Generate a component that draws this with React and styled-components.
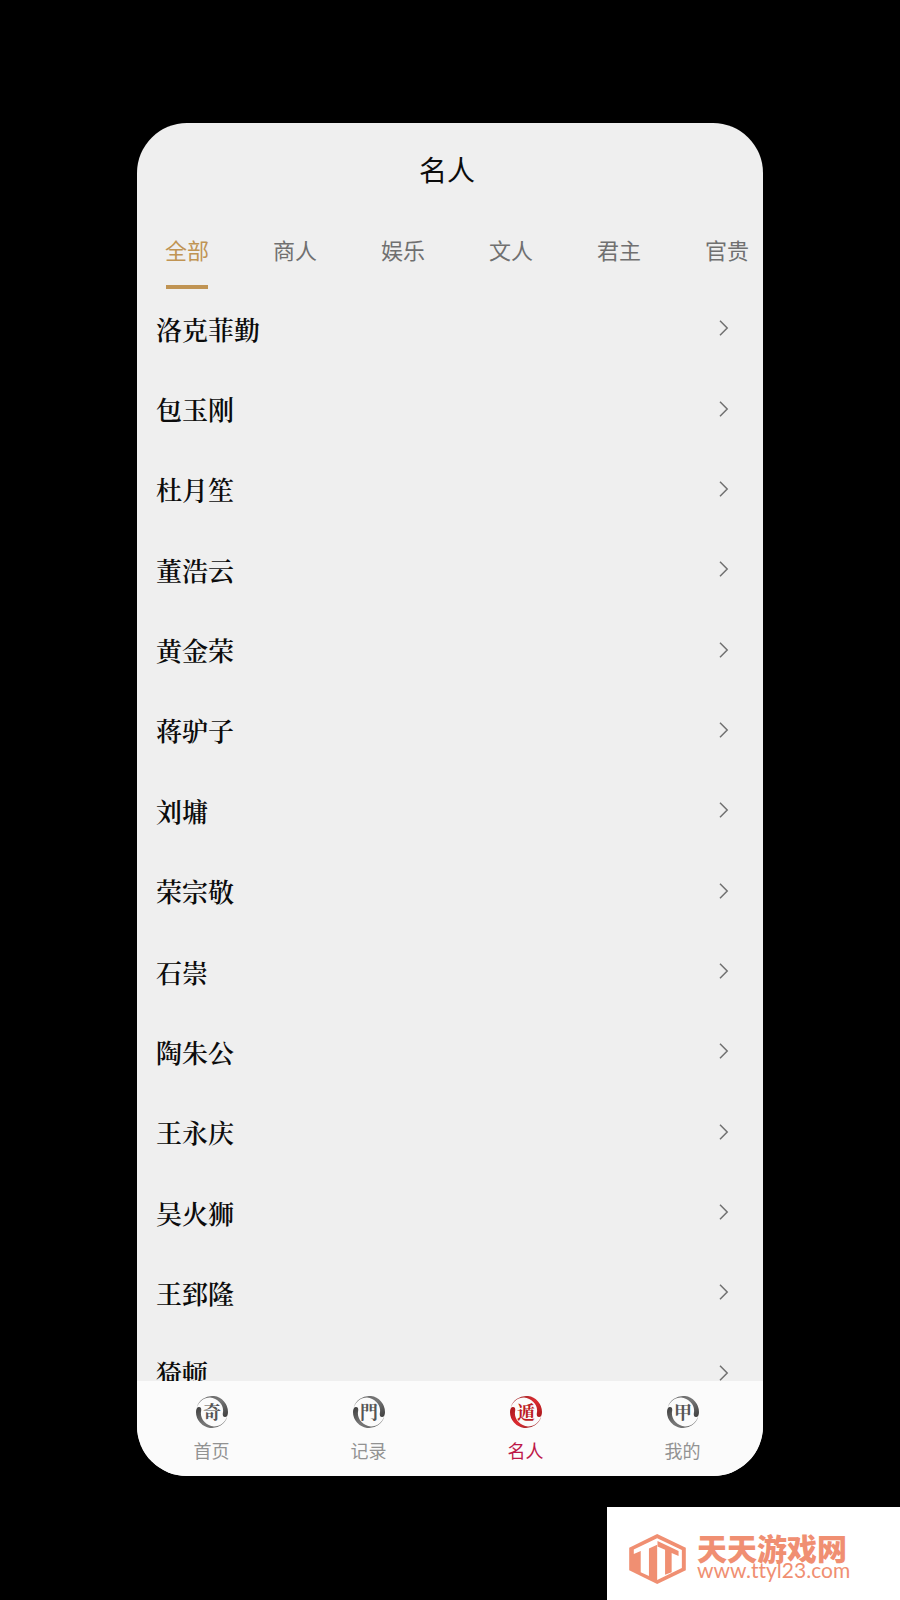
import React, { useState } from 'react';
import styled, { createGlobalStyle } from 'styled-components';

const GlobalStyle = createGlobalStyle`
  * {
    box-sizing: border-box;
  }
  body {
    margin: 0;
    background: #000;
    font-family: "Noto Sans CJK SC", sans-serif;
  }
`;

const Page = styled.div`
  display: flex;
  flex-direction: column;
  min-height: 100vh;
  padding-top: 123px;
  background: #000;
`;

const Phone = styled.main`
  display: flex;
  flex: 1;
  margin: 0 137px;
  overflow: hidden;
  border-radius: 50px;
  background: #efefef;
`;

const Screen = styled.div`
  display: flex;
  flex: 1;
  flex-direction: column;
  min-width: 0;
  margin: 0 2px 0 -4px;
`;

const Title = styled.h1`
  margin: 0;
  padding-top: 24px;
  color: #0c0c0c;
  font-size: 28px;
  font-weight: 400;
  line-height: 44px;
  text-align: center;
`;

const Tabs = styled.div`
  display: flex;
  margin-top: 24px;
  overflow: hidden;
`;

const Tab = styled.button`
  display: flex;
  flex: 0 0 108px;
  flex-direction: column;
  align-items: center;
  height: 74px;
  padding: 16px 0 0;
  border: 0;
  background: none;
  color: ${(props) => (props.$active ? '#c09453' : '#707070')};
  font-family: inherit;
  font-size: 22px;
  line-height: 36px;
  cursor: pointer;

  &::after {
    content: "";
    width: 42px;
    height: 4px;
    margin-top: 18px;
    background: ${(props) => (props.$active ? '#c09453' : 'transparent')};
  }
`;

const ListWrap = styled.div`
  display: flex;
  flex: 1;
  overflow: hidden;
`;

// the last row runs under the bottom bar
const List = styled.ul`
  display: grid;
  flex: 1;
  grid-auto-rows: minmax(80px, 1fr);
  margin: 0 0 -33px;
  padding: 0;
  list-style: none;
`;

const Row = styled.button`
  display: flex;
  align-items: center;
  justify-content: space-between;
  width: 100%;
  height: 100%;
  padding: 0 32px 2px 23px;
  border: 0;
  background: none;
  color: #0c0c0c;
  font-family: "Noto Serif CJK SC", "Noto Sans CJK SC", serif;
  font-size: 26px;
  font-weight: 600;
  text-align: left;
  cursor: pointer;
`;

const Nav = styled.nav`
  display: flex;
  height: 95px;
  margin: 0 -2px 0 0;
  padding-right: 2px;
  background: #fbfbfb;
`;

const NavItem = styled.a`
  display: flex;
  flex: 1;
  flex-direction: column;
  align-items: center;
  padding-top: 14px;
  color: ${(props) => (props.$active ? '#bd1747' : '#929292')};
  font-size: 18px;
  line-height: 28px;
  text-decoration: none;

  svg {
    margin-bottom: 7px;
  }
`;

const Banner = styled.a`
  display: flex;
  align-items: center;
  align-self: flex-end;
  gap: 10px;
  width: 293px;
  height: 93px;
  margin-top: 31px;
  padding: 10px 0 0 21px;
  background: #fff;
  color: #f08f72;
  text-decoration: none;
`;

const BannerText = styled.span`
  display: flex;
  flex-direction: column;
  padding-bottom: 4px;
`;

const BannerName = styled.strong`
  font-size: 30px;
  font-weight: 900;
  line-height: 26px;
`;

const BannerUrl = styled.span`
  font-family: Lato, sans-serif;
  font-size: 21px;
  font-variant-ligatures: none;
  line-height: 20px;
`;

const tabs = ['全部', '商人', '娱乐', '文人', '君主', '官贵'];

const people = [
  '洛克菲勤',
  '包玉刚',
  '杜月笙',
  '董浩云',
  '黄金荣',
  '蒋驴子',
  '刘墉',
  '荣宗敬',
  '石崇',
  '陶朱公',
  '王永庆',
  '吴火狮',
  '王郅隆',
  '猗顿',
];

const navItems = [
  { mark: '奇', label: '首页' },
  { mark: '門', label: '记录' },
  { mark: '遁', label: '名人' },
  { mark: '甲', label: '我的' },
];

const Chevron = () => (
  <svg width="10" height="16" viewBox="0 0 10 16" fill="none" stroke="#707070" strokeWidth="1.5">
    <path d="M1 .8 8.2 8 1 15.2" />
  </svg>
);

// one brush stroke of the ring, drawn twice
const stroke =
  'M1.500 13A16 16 0 0 1 33 17C33 20 32 22 30 22C27.500 22 27.500 19.500 28 17C29 10 23 3.500 15 2.500C9 2.500 4 6.500 1.500 13Z';

const InkIcon = ({ mark, active }) => {
  const id = active ? 'ink-red' : 'ink-grey';
  return (
    <svg width="34" height="34" viewBox="0 0 34 34" aria-hidden="true">
      <defs>
        <linearGradient id={id} x1="0" y1="0" x2="1" y2="1">
          <stop offset="0" stopColor={active ? '#8c2a2a' : '#666'} />
          <stop offset=".5" stopColor={active ? '#dc2a30' : '#777'} />
          <stop offset="1" stopColor={active ? '#a8181c' : '#3c3c3c'} />
        </linearGradient>
      </defs>
      <g fill={`url(#${id})`}>
        <path d={stroke} />
        <path d={stroke} transform="rotate(180 17 17)" />
      </g>
      <text
        x="17"
        y="24"
        fill={active ? '#bd1c24' : '#555'}
        fontFamily="Noto Serif CJK SC, Noto Sans CJK SC, serif"
        fontSize="18"
        fontWeight="700"
        textAnchor="middle"
      >
        {mark}
      </text>
    </svg>
  );
};

const Logo = () => (
  <svg width="59" height="52" viewBox="85 37 178 158" aria-hidden="true">
    <path fill="#f08f72" d="M173 40 260 82V150L173 192 88 150V82Z" />
    <path fill="#fff" d="M102 87 173 53 248 89V143L173 180V73L148 84V168L123 156V92L102 101Z" />
    <path fill="#f08f72" d="M174 61 238 92V107L217 98V156L197 164V88L174 78Z" />
  </svg>
);

const App = () => {
  const [activeTab, setActiveTab] = useState('全部');
  const [activeNav, setActiveNav] = useState('名人');

  return (
    <>
      <GlobalStyle />
      <Page>
        <Phone>
          <Screen>
            <Title>名人</Title>
            <Tabs role="tablist">
              {tabs.map((tab) => (
                <Tab
                  key={tab}
                  type="button"
                  role="tab"
                  aria-selected={tab === activeTab}
                  $active={tab === activeTab}
                  onClick={() => setActiveTab(tab)}
                >
                  {tab}
                </Tab>
              ))}
            </Tabs>
            <ListWrap>
              <List>
                {people.map((name) => (
                  <li key={name}>
                    <Row type="button">
                      {name}
                      <Chevron />
                    </Row>
                  </li>
                ))}
              </List>
            </ListWrap>
            <Nav>
              {navItems.map((item) => (
                <NavItem
                  key={item.label}
                  href="#"
                  $active={item.label === activeNav}
                  onClick={() => setActiveNav(item.label)}
                >
                  <InkIcon mark={item.mark} active={item.label === activeNav} />
                  {item.label}
                </NavItem>
              ))}
            </Nav>
          </Screen>
        </Phone>
        <Banner href="#">
          <Logo />
          <BannerText>
            <BannerName>天天游戏网</BannerName>
            <BannerUrl>www.ttyl23.com</BannerUrl>
          </BannerText>
        </Banner>
      </Page>
    </>
  );
};

export default App;
